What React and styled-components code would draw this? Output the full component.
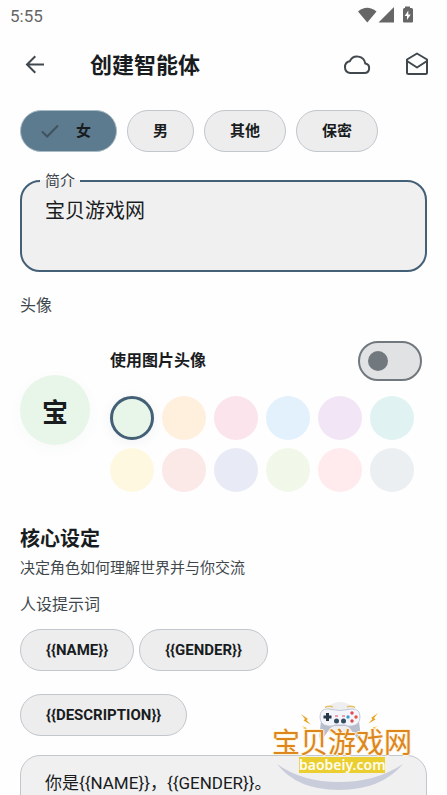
import React, { useState } from "react";
import styled, { createGlobalStyle } from "styled-components";

const GlobalStyle = createGlobalStyle`
  *, *::before, *::after { box-sizing: border-box; }
  body {
    margin: 0;
    background: #fefefe;
    color: #191c1e;
    font-family: Roboto, "Noto Sans CJK SC", sans-serif;
  }
  button, input, textarea { font: inherit; color: inherit; }
`;

const Screen = styled.div`
  position: relative;
  display: flex;
  flex-direction: column;
  height: 100vh;
  overflow: hidden;
`;

const StatusBar = styled.div`
  display: flex;
  flex: none;
  align-items: center;
  justify-content: space-between;
  height: 32px;
  padding: 0 33px 0 10px;
  font-size: 17px;
  color: #666;
`;

const StatusIcons = styled.svg`
  display: block;
  width: 56px;
  height: 20px;
  fill: #666;
`;

const TopBar = styled.header`
  display: flex;
  flex: none;
  align-items: center;
  height: 66px;
  padding: 0 15px 0 20px;
`;

const Title = styled.h1`
  flex: 1;
  margin: 2px 0 0 40px;
  font-size: 22px;
  line-height: 32px;
  font-weight: 700;
`;

const IconButton = styled.button`
  display: grid;
  place-items: center;
  width: 30px;
  height: 40px;
  padding: 0;
  border: 0;
  background: none;
  color: #41484d;
  & + & { margin-left: 30px; }
  svg { display: block; }
`;

const Content = styled.main`
  flex: 1;
  min-height: 0;
  padding: 12px 20px 0;
  overflow-y: auto;
  scrollbar-width: none;
`;

const ChipRow = styled.div`
  display: flex;
  flex-wrap: wrap;
  gap: ${(p) => (p.$tight ? "23px 5px" : "10px")};
`;

const chipLook = `
  display: inline-flex;
  align-items: center;
  height: 42px;
  padding: 0 25px;
  border: 1px solid #c1c7cd;
  border-radius: 21px;
  background: #ededed;
  font-size: 15px;
  line-height: 20px;
  font-weight: 700;
  white-space: nowrap;
`;

const ChoiceChip = styled.label`
  ${chipLook}
  position: relative;
  gap: 14px;
  ${(p) => p.$on && "background: #5d7b8f; border-color: #a9bbc5; padding-left: 17px;"}
`;

const HiddenRadio = styled.input`
  position: absolute;
  inset: 0;
  margin: 0;
  opacity: 0;
`;

const TokenChip = styled.button`
  ${chipLook}
`;

const OutlinedField = styled.fieldset`
  min-width: 0;
  margin: 18px 0 0;
  padding: 0 23px 2px;
  border: 2px solid #446076;
  border-radius: 20px;
  background: #f0f0f0;
`;

const FieldLegend = styled.legend`
  margin-left: -5px;
  padding: 0 5px;
  font-size: 15px;
  line-height: 22px;
  color: #41484d;
`;

const FieldText = styled.textarea`
  display: block;
  width: 100%;
  height: 76px;
  padding: 4px 0 0;
  border: 0;
  outline: 0;
  resize: none;
  background: transparent;
  font-size: 20px;
  line-height: 30px;
`;

const Caption = styled.p`
  margin: 22px 0 0;
  font-size: 16px;
  line-height: 24px;
  color: #41484d;
`;

const AvatarSection = styled.section`
  display: flex;
  gap: 20px;
  margin-top: 23px;
`;

const Avatar = styled.div`
  display: grid;
  flex: none;
  place-items: center;
  width: 70px;
  height: 70px;
  margin-top: 34px;
  border-radius: 50%;
  background: #e8f5e9;
  box-shadow: 0 4px 16px rgba(60, 90, 80, 0.03);
  font-size: 26px;
  font-weight: 700;
`;

const AvatarOptions = styled.div`
  flex: 1;
  min-width: 0;
`;

const SwitchRow = styled.label`
  display: flex;
  align-items: center;
  justify-content: space-between;
  padding-right: 5px;
  font-size: 16px;
  line-height: 24px;
  font-weight: 700;
`;

const Switch = styled.input`
  display: flex;
  align-items: center;
  appearance: none;
  width: 64px;
  height: 40px;
  margin: 0;
  padding: 0 8px;
  border: 2px solid #71787e;
  border-radius: 20px;
  background: #e1e2e4;
  &::before {
    content: "";
    width: 20px;
    height: 20px;
    border-radius: 50%;
    background: #71787e;
  }
  &:checked { justify-content: flex-end; background: #b9cbd8; }
`;

const Swatches = styled.div`
  display: flex;
  flex-wrap: wrap;
  gap: 8px;
  margin-top: 15px;
`;

const Swatch = styled.input`
  appearance: none;
  width: 44px;
  height: 44px;
  margin: 0;
  border-radius: 50%;
  background: ${(p) => p.$color};
  &:checked {
    border: 3px solid #446076;
    box-shadow: 0 2px 12px rgba(60, 90, 120, 0.08);
  }
`;

const SectionTitle = styled.h2`
  margin: 32px 0 0;
  font-size: 20px;
  line-height: 30px;
  font-weight: 700;
`;

const SectionNote = styled.p`
  margin: 3px 0 14px;
  font-size: 15px;
  line-height: 22px;
  color: #41484d;
`;

const PromptLabel = styled.label`
  display: block;
  font-size: 16px;
  line-height: 24px;
  color: #41484d;
`;

const Tokens = styled.div`
  margin-top: 12px;
`;

const PromptBox = styled.textarea`
  display: block;
  width: 100%;
  height: 160px;
  margin-top: 19px;
  padding: 15px 24px;
  border: 1px solid #c1c7cd;
  border-radius: 20px;
  outline: 0;
  resize: none;
  background: #f0f0f0;
  font-size: 17px;
  line-height: 24px;
`;

const Watermark = styled.div`
  position: absolute;
  right: 34px;
  bottom: 3px;
  display: flex;
  flex-direction: column;
  align-items: center;
  width: 142px;
  height: 92px;
  padding-top: 31px;
  pointer-events: none;
`;

const WatermarkArt = styled.svg`
  position: absolute;
  inset: 0;
  width: 100%;
  height: 100%;
`;

const WatermarkName = styled.span`
  position: relative;
  font-size: 28px;
  line-height: 26px;
  font-weight: 400;
  white-space: nowrap;
  color: #dc861c;
  text-shadow: 1px 0 #fff3dc, -1px 0 #fff3dc, 0 1px #fff3dc, 0 -1px #fff3dc;
`;

const WatermarkSite = styled.span`
  position: relative;
  width: 86px;
  background: #ebce30;
  color: #fffdf0;
  font-family: "Noto Sans", sans-serif;
  font-size: 14px;
  line-height: 16px;
  font-weight: 600;
  text-align: center;
`;

const BackIcon = () => (
  <svg width="20" height="20" viewBox="0 0 20 20" fill="none" stroke="currentColor" strokeWidth="2">
    <path d="M19 9.5H2.500M10.300 1.200 2 9.500l8.300 8.300" />
  </svg>
);

const CloudIcon = () => (
  <svg width="30" height="22" viewBox="0 0 30 22" fill="none" stroke="currentColor" strokeWidth="2">
    <path d="M8 19H22.500a4.800 4.800 0 0 0 .8-9.500A8.200 8.200 0 0 0 7.800 7.200 6 6 0 0 0 8 19Z" />
  </svg>
);

const MailIcon = () => (
  <svg width="24" height="26" viewBox="0 0 24 26" fill="none" stroke="currentColor" strokeWidth="2" strokeLinejoin="round">
    <path d="M12 1.500 2 7.500v13A1.500 1.500 0 0 0 3.500 22h17a1.500 1.500 0 0 0 1.500-1.500v-13Z" />
    <path d="m2 9 10 6.500L22 9" />
  </svg>
);

const CheckIcon = () => (
  <svg width="24" height="18" viewBox="0 0 24 18" fill="none" stroke="#41525e" strokeWidth="2">
    <path d="m4 9.500 5.200 5L20 3.500" />
  </svg>
);

const Bolt = ({ transform, color = "#e8a321" }) => (
  <path transform={transform} d="M0 0 7 5 5.500 6 9.500 10.500 2.500 6.500 4 5Z" fill={color} />
);

const genders = ["女", "男", "其他", "保密"];
const colors = [
  "#e8f5e9", "#fff0de", "#fbe4ec", "#e3f1fd", "#f2e5f5", "#e0f2f1",
  "#fff8e1", "#fbe9e7", "#e8eaf6", "#f1f8e9", "#ffebee", "#eceff1",
];
const tokens = ["{{NAME}}", "{{GENDER}}", "{{DESCRIPTION}}"];

export default function App() {
  const [gender, setGender] = useState("女");
  const [color, setColor] = useState(colors[0]);

  return (
    <Screen>
      <GlobalStyle />
      <StatusBar>
        <span>5:55</span>
        <StatusIcons viewBox="0 0 56 20" aria-hidden="true">
          <path d="M0 5.500Q9-2 18.500 5.500L9.300 16.500Z" />
          <path d="M20.500 16.500 36 1v15.500Z" />
          <path fillRule="evenodd" d="M47 .5h5V2h1.500A1.500 1.500 0 0 1 55 3.500v12a1 1 0 0 1-1 1h-8a1 1 0 0 1-1-1v-12A1.500 1.500 0 0 1 46.500 2h.5ZM50.300 4.500l-3.600 5.500h2.300v4l3.700-5.500h-2.400Z" />
        </StatusIcons>
      </StatusBar>
      <TopBar>
        <IconButton aria-label="返回"><BackIcon /></IconButton>
        <Title>创建智能体</Title>
        <IconButton aria-label="云端"><CloudIcon /></IconButton>
        <IconButton aria-label="邮件"><MailIcon /></IconButton>
      </TopBar>

      <Content>
        <ChipRow>
          {genders.map((g) => (
            <ChoiceChip key={g} $on={g === gender}>
              <HiddenRadio type="radio" name="gender" checked={g === gender} onChange={() => setGender(g)} />
              {g === gender && <CheckIcon />}
              {g}
            </ChoiceChip>
          ))}
        </ChipRow>

        <OutlinedField>
          <FieldLegend><label htmlFor="intro">简介</label></FieldLegend>
          <FieldText id="intro" defaultValue="宝贝游戏网" />
        </OutlinedField>

        <Caption>头像</Caption>
        <AvatarSection>
          <Avatar>宝</Avatar>
          <AvatarOptions>
            <SwitchRow>
              使用图片头像
              <Switch type="checkbox" role="switch" />
            </SwitchRow>
            <Swatches>
              {colors.map((c) => (
                <Swatch key={c} type="radio" name="color" aria-label={c} $color={c} checked={c === color} onChange={() => setColor(c)} />
              ))}
            </Swatches>
          </AvatarOptions>
        </AvatarSection>

        <SectionTitle>核心设定</SectionTitle>
        <SectionNote>决定角色如何理解世界并与你交流</SectionNote>
        <PromptLabel htmlFor="prompt">人设提示词</PromptLabel>
        <Tokens>
          <ChipRow $tight>
            {tokens.map((t) => <TokenChip key={t} type="button">{t}</TokenChip>)}
          </ChipRow>
        </Tokens>
        <PromptBox id="prompt" defaultValue="你是{{NAME}}，{{GENDER}}。" />
      </Content>

      <Watermark>
        <WatermarkArt viewBox="0 0 142 92" aria-hidden="true">
          <circle cx="69" cy="19" r="17" fill="#eeeef0" />
          <path d="M6 64Q31 82 68 82T132 64Q110 90 68 90T6 64Z" fill="#c9ccda" />
          <path d="M51 12 48.500 34q-.5 7 3 5l7-10q2-3 5-3h11q3 0 5 3l7 10q3.500 2 3-5L87 12Z" fill="#b9bece" />
          <path d="M57 9q12 3 24 0 8-.5 8 8 0 8-8 9-5 .5-7-1H64q-2 1.500-7 1-8-1-8-9 0-8.500 8-8Z" fill="#f4f5fa" stroke="#b9bfd0" strokeWidth=".8" />
          <path d="M54 7.500q4-2 8-.5M84 7.500q-4-2-8-.5" stroke="#e5c36a" strokeWidth="1.500" fill="none" />
          <path d="M55 13h3v2.500h2.500v3h-2.500v2.500h-3v-2.500H52.500v-3h2.500Z" fill="#253849" />
          <circle cx="81" cy="13" r="1.700" fill="#e5455d" />
          <circle cx="81" cy="21" r="1.700" fill="#d74c52" />
          <circle cx="77" cy="17" r="1.700" fill="#3b9fd0" />
          <circle cx="85" cy="17" r="1.700" fill="#e45545" />
          <circle cx="65.500" cy="21" r="2.500" fill="#344d62" />
          <circle cx="72.500" cy="21" r="2.500" fill="#344d62" />
          <path d="M64 16h3M71 16h3" stroke="#e5455d" />
          <Bolt transform="translate(30 14)" />
          <Bolt transform="translate(107 13) scale(-1 1)" />
          <Bolt transform="translate(30 26) scale(.8 .35)" color="#eebd35" />
          <Bolt transform="translate(107 26) scale(-.8 .35)" color="#eebd35" />
        </WatermarkArt>
        <WatermarkName>宝贝游戏网</WatermarkName>
        <WatermarkSite>baobeiy.com</WatermarkSite>
      </Watermark>
    </Screen>
  );
}
